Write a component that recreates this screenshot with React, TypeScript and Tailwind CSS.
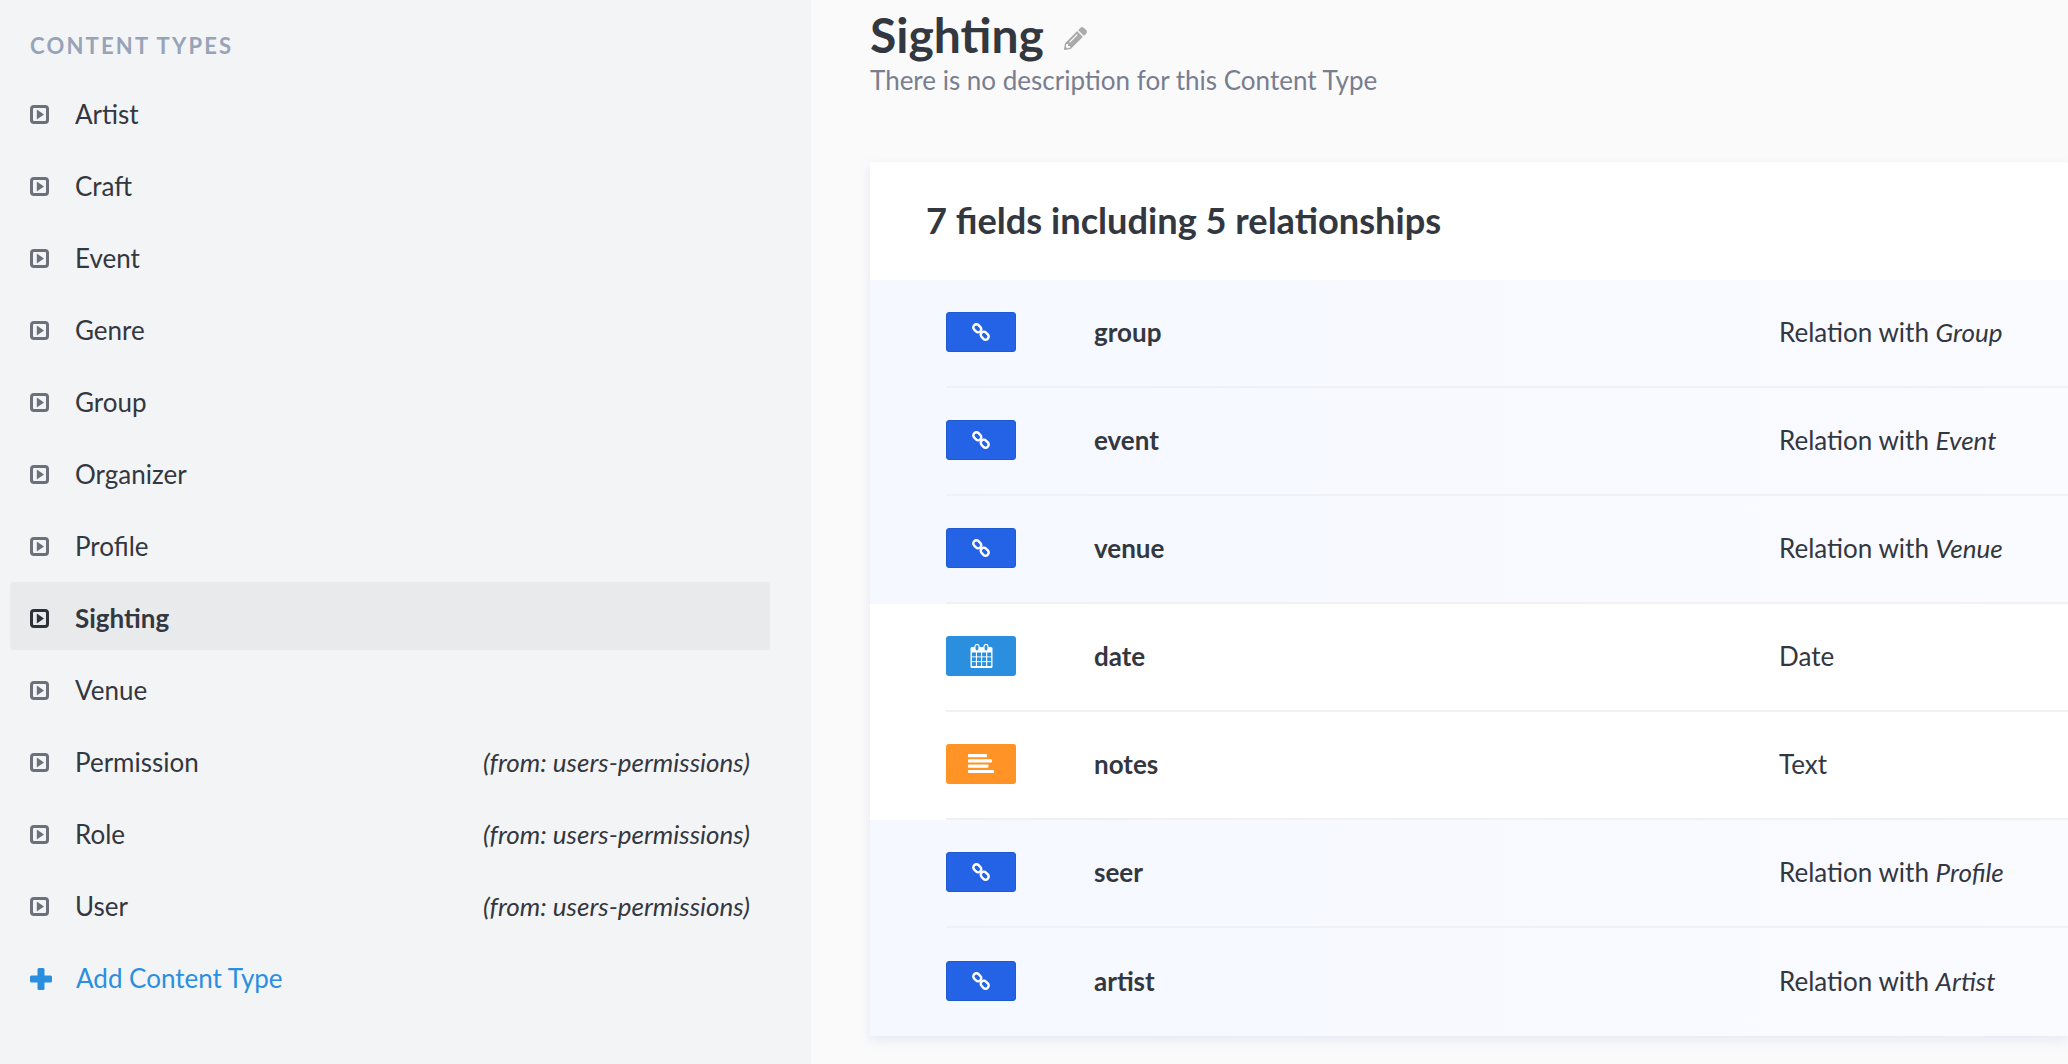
import React from "react";
import { FaPencilAlt } from "react-icons/fa";

const contentTypes = [
  { name: "Artist" },
  { name: "Craft" },
  { name: "Event" },
  { name: "Genre" },
  { name: "Group" },
  { name: "Organizer" },
  { name: "Profile" },
  { name: "Sighting", active: true },
  { name: "Venue" },
  { name: "Permission", source: "(from: users-permissions)" },
  { name: "Role", source: "(from: users-permissions)" },
  { name: "User", source: "(from: users-permissions)" },
];

type Kind = "relation" | "date" | "text";

const fields: { name: string; kind: Kind; type: string; target?: string }[] = [
  { name: "group", kind: "relation", type: "Relation with", target: "Group" },
  { name: "event", kind: "relation", type: "Relation with", target: "Event" },
  { name: "venue", kind: "relation", type: "Relation with", target: "Venue" },
  { name: "date", kind: "date", type: "Date" },
  { name: "notes", kind: "text", type: "Text" },
  { name: "seer", kind: "relation", type: "Relation with", target: "Profile" },
  { name: "artist", kind: "relation", type: "Relation with", target: "Artist" },
];

const PlayBox = ({ active }: { active?: boolean }) => (
  <svg width="19" height="19" viewBox="0 0 19 19" className="shrink-0">
    <rect x="1.5" y="1.5" width="16" height="16" rx="2.5" fill="none" stroke={active ? "#2d3138" : "#6b707c"} strokeWidth="3" />
    <path d="M6.8 4.6 L14 9.5 L6.8 14.4 Z" fill={active ? "#2d3138" : "#6b707c"} />
  </svg>
);

const LinkIcon = () => (
  <svg width="20" height="20" viewBox="0 0 20 20" fill="none" stroke="#fff" strokeWidth="2.4">
    <rect x="2" y="3.2" width="8.6" height="6.2" rx="3" transform="rotate(45 6.3 6.3)" />
    <rect x="9.4" y="10.6" width="8.6" height="6.2" rx="3" transform="rotate(45 13.7 13.7)" />
  </svg>
);

const CalendarIcon = () => (
  <svg width="23" height="24" viewBox="0 0 23 24">
    <rect x="0.5" y="3" width="22" height="21" rx="1.5" fill="#fff" />
    <rect x="5" y="0.5" width="4" height="6.5" rx="2" fill="#2b8fdf" stroke="#fff" strokeWidth="1.2" />
    <rect x="14" y="0.5" width="4" height="6.5" rx="2" fill="#2b8fdf" stroke="#fff" strokeWidth="1.2" />
    <g fill="#2b8fdf">
      {[1.9, 7, 12.1, 17.2].map((x) =>
        [8.5, 13.3, 18.1].map((y) => <rect key={`${x}-${y}`} x={x} y={y} width="4" height="3.9" />)
      )}
    </g>
  </svg>
);

const TextIcon = () => (
  <svg width="27" height="20" viewBox="0 0 27 20" fill="#fff">
    <rect x="0" y="0" width="19" height="3.2" rx="0.8" />
    <rect x="0" y="5.3" width="24" height="3.2" rx="0.8" />
    <rect x="0" y="10.6" width="20.5" height="3.2" rx="0.8" />
    <rect x="0" y="15.9" width="26" height="3.2" rx="0.8" />
  </svg>
);

const Badge = ({ kind }: { kind: Kind }) => {
  if (kind === "date")
    return (
      <div className="flex h-10 w-[70px] items-center justify-center rounded-[3px] bg-[#2b8fdf]">
        <CalendarIcon />
      </div>
    );
  if (kind === "text")
    return (
      <div className="flex h-10 w-[70px] items-center justify-center rounded-[3px] bg-[#ff9325]">
        <TextIcon />
      </div>
    );
  return (
    <div className="flex h-10 w-[70px] items-center justify-center rounded-[3px] border border-[#1d5ad0] bg-[#2463e6]">
      <LinkIcon />
    </div>
  );
};

export default function App() {
  return (
    <div className="flex h-[1064px] w-[2068px] overflow-hidden bg-[#fafafb] font-['Lato',sans-serif] text-[#333740]">
      {/* Left menu */}
      <aside className="w-[811px] shrink-0 bg-[#f3f4f6] pl-[10px] pr-[41px]">
        <div className="flex h-[78px] items-center pt-[14px] pl-[20px] text-[22px] font-bold uppercase leading-none tracking-[2.2px] text-[#97a3b8]">
          Content Types
        </div>
        {contentTypes.map((item) => (
          <div
            key={item.name}
            className={`mb-1 flex h-[68px] items-center rounded-[4px] pl-[20px] pr-[20px] pt-[5px] text-[26px] ${
              item.active ? "bg-[#e9eaec] font-bold" : ""
            }`}
          >
            <PlayBox active={item.active} />
            <span className="ml-[26px]">{item.name}</span>
            {item.source && <span className="ml-auto text-[26px] italic">{item.source}</span>}
          </div>
        ))}
        <div className="flex h-[68px] items-center pl-[20px] pt-[5px] text-[26px] text-[#2b8fdf]">
          <svg width="22" height="22" viewBox="0 0 22 22" className="shrink-0" fill="#2b8fdf">
            <rect x="7.5" y="0" width="7" height="22" rx="1.5" />
            <rect x="0" y="7.5" width="22" height="7" rx="1.5" />
          </svg>
          <span className="ml-[24px]">Add Content Type</span>
        </div>
      </aside>

      {/* Main column */}
      <main className="min-w-0 flex-1 pl-[59px]">
        <div className="flex h-[60px] items-center pt-[10px]">
          <h1 className="text-[48px] font-bold leading-none">Sighting</h1>
          <FaPencilAlt className="ml-[20px] mt-[6px] h-[23px] w-[23px] text-[#aaa]" />
        </div>
        <p className="h-[102px] pt-[1px] text-[26px] leading-[38px] text-[#787e8f]">
          There is no description for this Content Type
        </p>

        <section className="rounded-t-[3px] bg-white shadow-[0_4px_12px_rgba(190,200,225,0.35)]">
          <h2 className="flex h-[118px] items-center pb-[2px] pl-[56px] text-[36.2px] font-bold">
            7 fields including 5 relationships
          </h2>
          {fields.map((field, i) => (
            <div
              key={field.name}
              className={`h-[108px] pl-[76px] ${
                field.kind === "relation" ? "bg-gradient-to-r from-[#f5f8ff] to-[#fafbff]" : "bg-white"
              }`}
            >
              <div
                className={`flex h-full items-center text-[26px] ${
                  i < fields.length - 1 ? "border-b-2 border-[#f1f1f3]" : ""
                }`}
              >
                <div className="mb-[2px] w-[148px] shrink-0">
                  <Badge kind={field.kind} />
                </div>
                <div className="mb-[2px] w-[685px] shrink-0 font-bold">{field.name}</div>
                <div className="mb-[2px]">
                  {field.type} {field.target && <em>{field.target}</em>}
                </div>
              </div>
            </div>
          ))}
        </section>
      </main>
    </div>
  );
}
